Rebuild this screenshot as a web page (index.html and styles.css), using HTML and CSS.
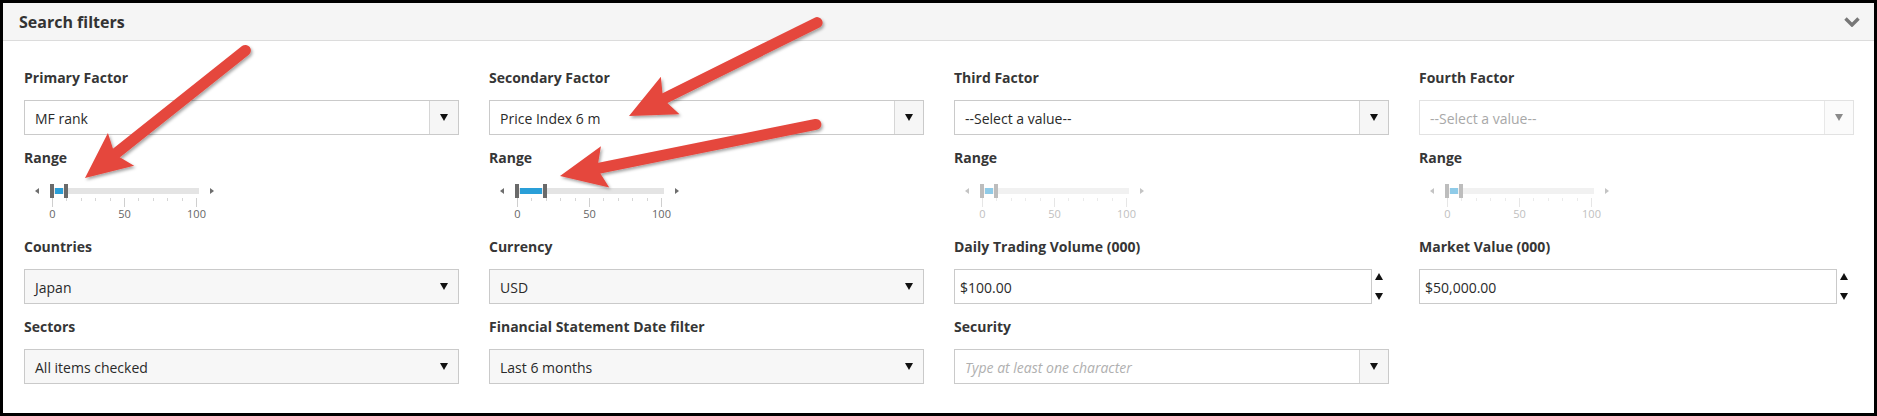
FILE: index.html
```html
<!DOCTYPE html>
<html lang="en">
<head>
<meta charset="utf-8">
<title>Search filters</title>
<link rel="stylesheet" href="styles.css">
</head>
<body>
<div class="panel">
  <div class="panel-heading">
    <span class="panel-title">Search filters</span>
    <svg class="chevron" width="16" height="10" viewBox="0 0 16 10"><polyline points="1.5,1.5 8,8 14.5,1.5" fill="none" stroke="#777" stroke-width="3.4"/></svg>
  </div>
  <div class="panel-body">
    <div class="grid">
      <!-- Row 1 -->
      <div class="cell cell-top">
        <label class="lbl">Primary Factor</label>
        <div class="select"><span class="val">MF rank</span><span class="btn"><i class="caret"></i></span></div>
        <label class="lbl range-lbl">Range</label>
        <div class="slider">
          <div class="sl-main">
            <i class="sl-arrow left"></i>
            <div class="sl-track">
              <span class="sl-sel" style="left:5px;width:8px"></span>
              <span class="sl-handle" style="left:0px"></span>
              <span class="sl-handle" style="left:13.5px"></span>
            </div>
            <i class="sl-arrow right"></i>
          </div>
          <div class="sl-scale">
            <div class="sl-ticks"></div>
            <div class="sl-labels"><span>0</span><span>50</span><span>100</span></div>
          </div>
        </div>
      </div>
      <div class="cell cell-top">
        <label class="lbl">Secondary Factor</label>
        <div class="select"><span class="val">Price Index 6 m</span><span class="btn"><i class="caret"></i></span></div>
        <label class="lbl range-lbl">Range</label>
        <div class="slider">
          <div class="sl-main">
            <i class="sl-arrow left"></i>
            <div class="sl-track">
              <span class="sl-sel" style="left:5px;width:22px"></span>
              <span class="sl-handle" style="left:0px"></span>
              <span class="sl-handle" style="left:28px"></span>
            </div>
            <i class="sl-arrow right"></i>
          </div>
          <div class="sl-scale">
            <div class="sl-ticks"></div>
            <div class="sl-labels"><span>0</span><span>50</span><span>100</span></div>
          </div>
        </div>
      </div>
      <div class="cell cell-top">
        <label class="lbl">Third Factor</label>
        <div class="select"><span class="val">--Select a value--</span><span class="btn"><i class="caret"></i></span></div>
        <label class="lbl range-lbl">Range</label>
        <div class="slider disabled">
          <div class="sl-main">
            <i class="sl-arrow left"></i>
            <div class="sl-track">
              <span class="sl-sel" style="left:5px;width:8px"></span>
              <span class="sl-handle" style="left:0px"></span>
              <span class="sl-handle" style="left:13.5px"></span>
            </div>
            <i class="sl-arrow right"></i>
          </div>
          <div class="sl-scale">
            <div class="sl-ticks"></div>
            <div class="sl-labels"><span>0</span><span>50</span><span>100</span></div>
          </div>
        </div>
      </div>
      <div class="cell cell-top">
        <label class="lbl">Fourth Factor</label>
        <div class="select disabled"><span class="val">--Select a value--</span><span class="btn"><i class="caret"></i></span></div>
        <label class="lbl range-lbl">Range</label>
        <div class="slider disabled">
          <div class="sl-main">
            <i class="sl-arrow left"></i>
            <div class="sl-track">
              <span class="sl-sel" style="left:5px;width:8px"></span>
              <span class="sl-handle" style="left:0px"></span>
              <span class="sl-handle" style="left:13.5px"></span>
            </div>
            <i class="sl-arrow right"></i>
          </div>
          <div class="sl-scale">
            <div class="sl-ticks"></div>
            <div class="sl-labels"><span>0</span><span>50</span><span>100</span></div>
          </div>
        </div>
      </div>

      <!-- Row 2 -->
      <div class="cell cell-mid">
        <label class="lbl">Countries</label>
        <div class="select flat"><span class="val">Japan</span><span class="btn"><i class="caret"></i></span></div>
      </div>
      <div class="cell cell-mid">
        <label class="lbl">Currency</label>
        <div class="select flat"><span class="val">USD</span><span class="btn"><i class="caret"></i></span></div>
      </div>
      <div class="cell cell-mid">
        <label class="lbl">Daily Trading Volume (000)</label>
        <div class="num">
          <span class="num-input">$100.00</span>
          <span class="spin"><i class="up"></i><i class="down"></i></span>
        </div>
      </div>
      <div class="cell cell-mid">
        <label class="lbl">Market Value (000)</label>
        <div class="num">
          <span class="num-input">$50,000.00</span>
          <span class="spin"><i class="up"></i><i class="down"></i></span>
        </div>
      </div>

      <!-- Row 3 -->
      <div class="cell">
        <label class="lbl">Sectors</label>
        <div class="select flat"><span class="val">All items checked</span><span class="btn"><i class="caret"></i></span></div>
      </div>
      <div class="cell">
        <label class="lbl">Financial Statement Date filter</label>
        <div class="select flat"><span class="val">Last 6 months</span><span class="btn"><i class="caret"></i></span></div>
      </div>
      <div class="cell">
        <label class="lbl">Security</label>
        <div class="select"><span class="val placeholder">Type at least one character</span><span class="btn"><i class="caret"></i></span></div>
      </div>
      <div class="cell"></div>
    </div>
  </div>
</div>

<svg class="annot" width="1877" height="416" viewBox="0 0 1877 416">
  <defs>
    <filter id="sh" x="-20%" y="-20%" width="140%" height="140%">
      <feDropShadow dx="1.5" dy="2" stdDeviation="1.6" flood-color="#000" flood-opacity="0.35"/>
    </filter>
  </defs>
  <g filter="url(#sh)" fill="#e5473e">
    <g transform="translate(85 178) rotate(141.5)">
      <line x1="-205" y1="0" x2="-34" y2="0" stroke="#e5473e" stroke-width="11" stroke-linecap="round"/>
      <polygon points="0,0 -46,-21 -38,0 -46,21"/>
    </g>
  </g>
  <g filter="url(#sh)" fill="#e5473e">
    <g transform="translate(629 116) rotate(153.6)">
      <line x1="-210" y1="0" x2="-34" y2="0" stroke="#e5473e" stroke-width="11" stroke-linecap="round"/>
      <polygon points="0,0 -46,-21 -38,0 -46,21"/>
    </g>
  </g>
  <g filter="url(#sh)" fill="#e5473e">
    <g transform="translate(560 176) rotate(168.6)">
      <line x1="-261" y1="0" x2="-34" y2="0" stroke="#e5473e" stroke-width="11" stroke-linecap="round"/>
      <polygon points="0,0 -46,-21 -38,0 -46,21"/>
    </g>
  </g>
</svg>
</body>
</html>
```

FILE: styles.css
```css
* { box-sizing: border-box; }

html, body {
  margin: 0;
  padding: 0;
}

body {
  background: #000;
  font-family: "Open Sans", "Noto Sans", "Liberation Sans", sans-serif;
  color: #333;
  width: 1877px;
  height: 416px;
  overflow: hidden;
  position: relative;
}

.panel {
  margin: 3px;
  height: 410px;
  background: #fff;
}

.panel-heading {
  height: 38px;
  background: #f5f5f5;
  border-bottom: 1px solid #dcdcdc;
  display: flex;
  align-items: center;
  justify-content: space-between;
  padding: 0 14px 0 16px;
}

.panel-title {
  font-size: 16px;
  font-weight: 700;
  color: #333;
}

.chevron { display: block; }

.panel-body {
  padding: 27px 19px 0 21px;
}

.grid {
  display: grid;
  grid-template-columns: repeat(4, 435px);
  column-gap: 30px;
}

.cell { display: flex; flex-direction: column; }
.cell-top { margin-bottom: 17px; }
.cell-mid { margin-bottom: 13px; }

.lbl {
  display: block;
  height: 20px;
  line-height: 20px;
  font-size: 14px;
  font-weight: 700;
  color: #363636;
  margin-bottom: 12px;
  white-space: nowrap;
}

.range-lbl { margin-top: 13px; margin-bottom: 0; }

/* select */
.select {
  display: flex;
  height: 35px;
  border: 1px solid #cacaca;
  background: #fff;
}

.select .val {
  flex: 1;
  padding: 3px 0 0 10px;
  line-height: 30px;
  font-size: 14px;
  color: #2a2a2a;
  white-space: nowrap;
  overflow: hidden;
}

.select .btn {
  width: 29px;
  border-left: 1px solid #d6d6d6;
  background: #f6f6f6;
  display: flex;
  align-items: center;
  justify-content: center;
}

.caret {
  display: block;
  width: 0;
  height: 0;
  border-left: 4.5px solid transparent;
  border-right: 4.5px solid transparent;
  border-top: 7px solid #111;
}

.select.flat { background: #f7f7f7; }
.select.flat .btn { border-left: none; background: transparent; }

.select.disabled { border-color: #e2e2e2; }
.select.disabled .val { color: #a8a8a8; }
.select.disabled .btn { border-left-color: #e8e8e8; background: #fbfbfb; }
.select.disabled .caret { border-top-color: #8a8a8a; }

.val.placeholder { font-style: italic; color: #b0b0b0; }

/* number input */
.num { display: flex; height: 35px; }

.num-input {
  width: 418px;
  height: 35px;
  border: 1px solid #cacaca;
  padding: 3px 0 0 5px;
  line-height: 30px;
  font-size: 14px;
  color: #2a2a2a;
}

.spin {
  width: 17px;
  display: flex;
  flex-direction: column;
  justify-content: space-between;
  padding: 4px 0 4px 3px;
}

.spin .up, .spin .down {
  display: block;
  width: 0;
  height: 0;
  border-left: 4.5px solid transparent;
  border-right: 4.5px solid transparent;
}
.spin .up { border-bottom: 7px solid #111; }
.spin .down { border-top: 7px solid #111; }

/* slider */
.slider { height: 52px; }

.sl-main {
  display: flex;
  align-items: center;
  height: 14px;
  margin-top: 16px;
  padding-left: 11px;
}

.sl-arrow {
  display: block;
  width: 0;
  height: 0;
  border-top: 3.5px solid transparent;
  border-bottom: 3.5px solid transparent;
}
.sl-arrow.left { border-right: 4px solid #6e6e6e; }
.sl-arrow.right { border-left: 4px solid #6e6e6e; }

.sl-track {
  position: relative;
  width: 149px;
  height: 6px;
  margin: 0 11px;
  background: #e4e4e4;
}

.sl-sel {
  position: absolute;
  top: 0;
  height: 6px;
  background: #2a9fd8;
}

.sl-handle {
  position: absolute;
  top: -4px;
  width: 4px;
  height: 14px;
  background: #6a6a6a;
}

.sl-scale {
  margin-left: 28px;
  width: 145px;
}

.sl-ticks {
  height: 9px;
  background:
    repeating-linear-gradient(90deg, #cfcfcf 0 1px, transparent 1px 72px) 0 0 / 145px 9px no-repeat,
    repeating-linear-gradient(90deg, #d6d6d6 0 1px, transparent 1px 14.4px) 0 0 / 145px 3px no-repeat;
}

.sl-labels {
  display: flex;
  justify-content: space-between;
  height: 14px;
  margin-top: 0;
  font-size: 11px;
  line-height: 14px;
  color: #666;
}

.sl-labels span {
  width: 1px;
  display: flex;
  justify-content: center;
  white-space: nowrap;
}

.slider.disabled .sl-arrow.left { border-right-color: #c4c4c4; }
.slider.disabled .sl-arrow.right { border-left-color: #c4c4c4; }
.slider.disabled .sl-track { background: #f1f1f1; }
.slider.disabled .sl-sel { background: #8fcbe8; }
.slider.disabled .sl-handle { background: #bdbdbd; }
.slider.disabled .sl-labels { color: #c0c0c0; }
.slider.disabled .sl-ticks {
  background:
    repeating-linear-gradient(90deg, #e6e6e6 0 1px, transparent 1px 72px) 0 0 / 145px 9px no-repeat,
    repeating-linear-gradient(90deg, #ebebeb 0 1px, transparent 1px 14.4px) 0 0 / 145px 3px no-repeat;
}

/* annotation arrows overlay */
.annot {
  position: absolute;
  left: 0;
  top: 0;
  pointer-events: none;
}
```
